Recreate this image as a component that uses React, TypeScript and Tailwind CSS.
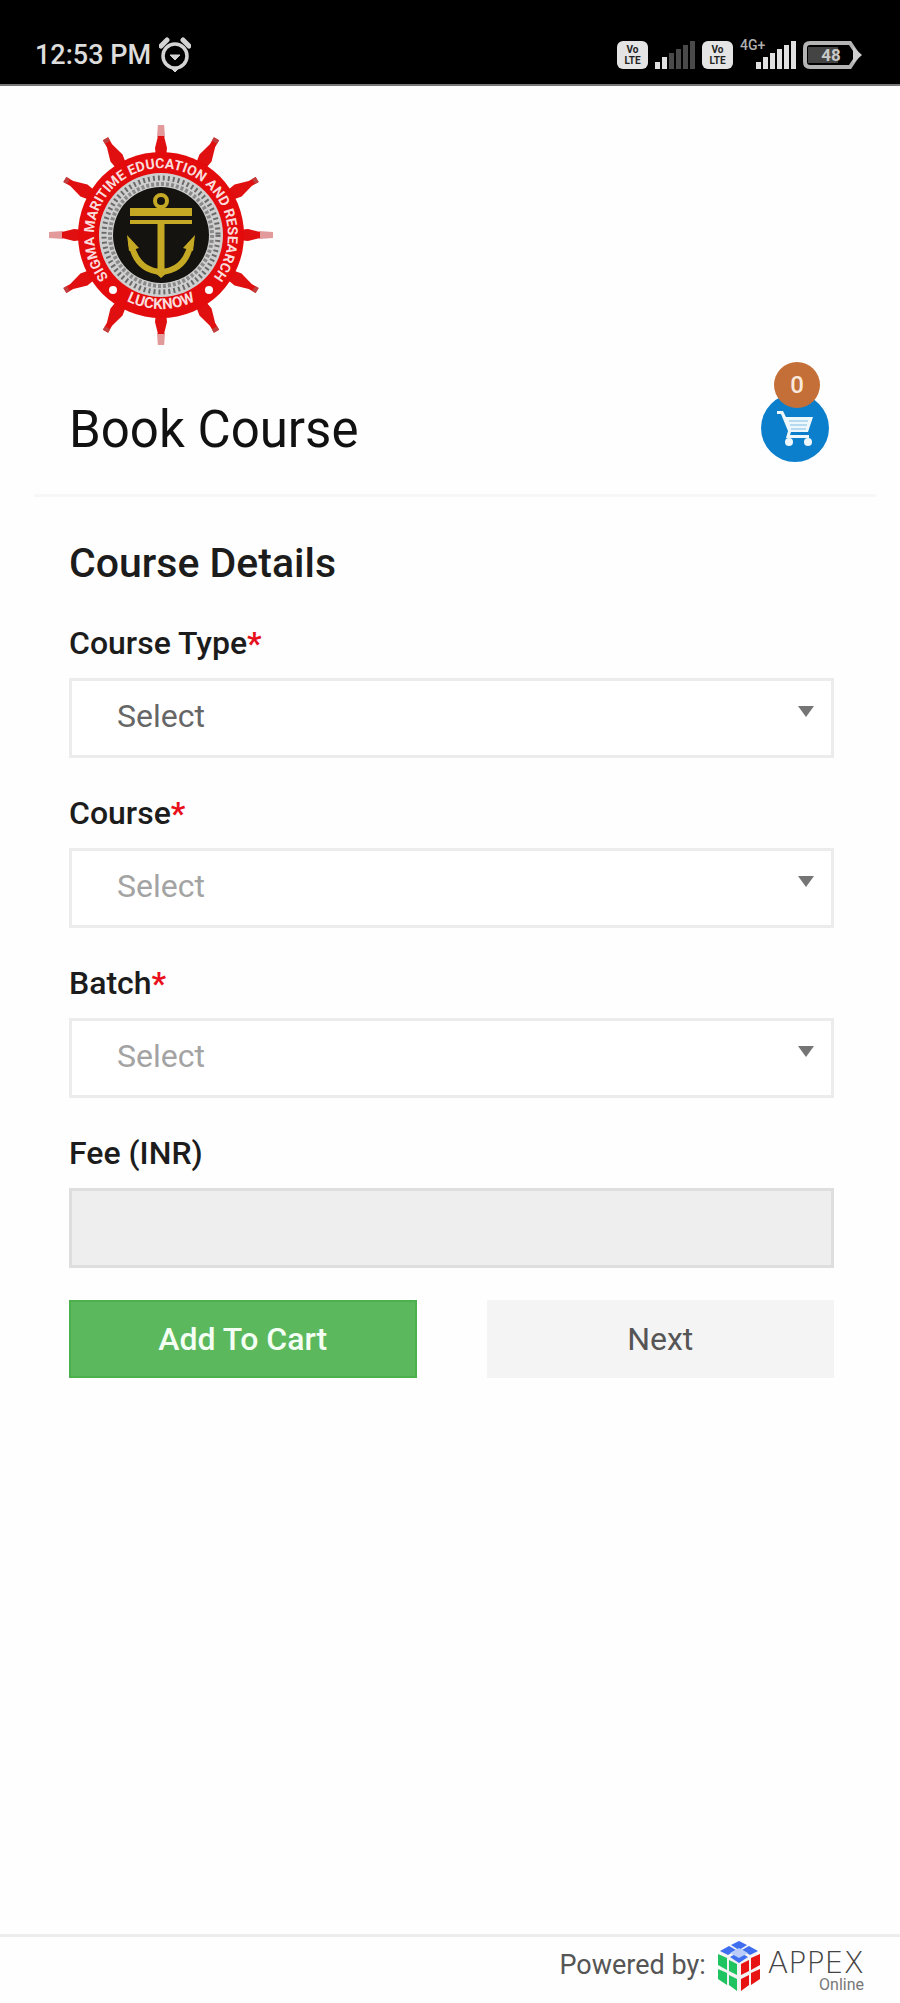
import { useState } from 'react';

type SelectFieldProps = {
  id: string;
  label: string;
  options: string[];
  value: string;
  disabled?: boolean;
  onChange: (value: string) => void;
};

const DIAGONAL_SPOKES = [30, 60, 120, 150, 210, 240, 300, 330];
const STRAIGHT_SPOKES = [0, 90, 180, 270];

function AlarmIcon() {
  return (
    <svg className="w-8 h-9" viewBox="0 0 32 36" fill="none" stroke="#d4d4d4" aria-hidden="true">
      <circle cx="16" cy="19" r="12" strokeWidth="3.5" />
      <path d="M2 9 8 3M30 9 24 3" strokeWidth="5" strokeLinecap="round" />
      <path d="M11 18h10l-5 5z" fill="#d4d4d4" strokeWidth="1" />
      <path d="M13 32h6l-3 3z" fill="#d4d4d4" />
    </svg>
  );
}

function VolteBadge({ top, bottom }: { top: string; bottom: string }) {
  return (
    <span className="flex flex-col items-center justify-center w-[31px] h-7 rounded-md bg-[#e4e4e4] text-[#222] font-bold text-[10px] leading-[11px]">
      <span>{top}</span>
      <span>{bottom}</span>
    </span>
  );
}

function SignalBars({ active }: { active: number }) {
  return (
    <svg className="w-10 h-7" viewBox="0 0 40 28" aria-hidden="true">
      {[7, 12, 16, 20, 24, 28].map((h, i) => (
        <rect
          key={h}
          x={i * 7}
          y={28 - h}
          width="5"
          height={h}
          fill={i < active ? '#e0e0e0' : '#4a4a4a'}
        />
      ))}
    </svg>
  );
}

function Battery() {
  return (
    <svg className="w-[59px] h-7" viewBox="0 0 59 28" aria-hidden="true">
      <path d="M7 2h40l8 12-8 12H7q-5 0-5-5V7q0-5 5-5z" fill="#000" stroke="#b4b4b4" strokeWidth="4" />
      <path d="M50 6l9 8-9 8z" fill="#d0d0d0" />
      <path d="M5 6h30v16H5z" fill="#444" />
      <text x="28" y="20" textAnchor="middle" fontSize="17" fontWeight="700" fill="#c8c8c8">
        48
      </text>
    </svg>
  );
}

function StatusBar() {
  return (
    <div className="flex items-end justify-between h-[86px] pl-[35px] pr-[38px] pb-[11px] bg-black border-b-2 border-[#777] text-[#dcdcdc]">
      <div className="flex items-center gap-2 text-[27px] leading-9 font-medium">
        <span>12:53 PM</span>
        <AlarmIcon />
      </div>
      <div className="flex items-center gap-[7px] pb-1">
        <VolteBadge top="Vo" bottom="LTE" />
        <SignalBars active={2} />
        <VolteBadge top="Vo" bottom="LTE" />
        <div className="relative flex pl-4">
          <span className="absolute left-0 -top-1 text-[14px] leading-4 font-medium text-[#b0b0b0]">4G+</span>
          <SignalBars active={6} />
        </div>
        <Battery />
      </div>
    </div>
  );
}

// ship wheel with the anchor in the middle
function InstituteLogo() {
  return (
    <svg className="w-[226px] h-[220px]" viewBox="-113 -110 226 220" role="img" aria-label="Institute logo">
      <defs>
        <path id="ring-top" d="M-47 48A67 67 0 1 1 47 48" />
        <path id="ring-bottom" d="M-61 44A77 77 0 0 0 61 44" />
      </defs>
      {STRAIGHT_SPOKES.map((a) => (
        <g key={a} transform={`rotate(${a})`}>
          <path d="M-3-112h6l1 14h-8z" fill="#e29a9a" />
          <path d="M-3-99h6l3 12-1 10h-10l-1-10z" fill="#e01010" />
        </g>
      ))}
      {DIAGONAL_SPOKES.map((a) => (
        <g key={a} transform={`rotate(${a})`}>
          <path d="M-3-111h6v8l4 14-2 12h-10l-2-12 4-14z" fill="#e01010" />
          <path d="M-3-111h6v4h-6z" fill="#c04040" />
        </g>
      ))}
      <circle r="83" fill="#e30b0b" />
      <circle r="62" fill="#cfcfcf" />
      <circle r="57" fill="none" stroke="#6a6a6a" strokeWidth="5" strokeDasharray="2 3" />
      <circle r="51" fill="none" stroke="#8a8a8a" strokeWidth="4" strokeDasharray="3 2" />
      <circle r="48" fill="#15130f" />
      <g fill="#fbdcdc" fontWeight="700">
        <text fontSize="14">
          <textPath href="#ring-top" startOffset="50%" textAnchor="middle">
            SIGMA MARITIME EDUCATION AND RESEARCH
          </textPath>
        </text>
        <text fontSize="15">
          <textPath href="#ring-bottom" startOffset="50%" textAnchor="middle">
            LUCKNOW
          </textPath>
        </text>
      </g>
      <circle cx="-48" cy="55" r="4" fill="#fff" />
      <circle cx="48" cy="55" r="4" fill="#fff" />
      <g stroke="#c5a925" fill="none">
        <circle cx="0" cy="-34" r="6" strokeWidth="4" />
        <path d="M0-28v8M0-12v50" strokeWidth="7" />
        <path d="M-30 8C-26 28-14 36 0 37C14 36 26 28 30 8" strokeWidth="6" />
      </g>
      <g fill="#c5a925">
        <path d="M-31-27h62v8h-62zM-31-15h62v4h-62z" />
        <path d="M-34 0l12 13-10 3zM34 0l-12 13 10 3zM-8 36h16l-8 7z" />
      </g>
    </svg>
  );
}

function CartIcon() {
  return (
    <svg className="w-10 h-10" viewBox="0 0 40 40" aria-hidden="true">
      <path d="M2 3h6l3 6h27l-5 15H16l-1 3h19v3H11l2-7L6 6H2z" fill="#eef7fc" />
      <path d="M14 13h19M15 17h17M16 21h15" stroke="#7fbfe6" strokeWidth="1" />
      <circle cx="14" cy="34" r="4" fill="#eef7fc" />
      <circle cx="33" cy="34" r="4" fill="#eef7fc" />
    </svg>
  );
}

function AppexCube() {
  return (
    <svg className="w-11 h-[50px]" viewBox="0 0 44 50" aria-hidden="true">
      <path d="M22 0l18 10v30L22 50 4 40V10z" fill="#f3f3f3" />
      <g fill="#3f6ff0">
        <path d="M22 0l8 4-8 5-8-5zM12 5l7 4-8 5-8-4zM32 5l9 5-8 4-8-5zM22 11l9 5-9 6-9-6z" />
      </g>
      <path d="M22 7l9 5-9 5-9-5z" fill="#b9ccfa" />
      <g fill="#1fc35f">
        <path d="M1 13l9 4v12l-9-5zM12 19l8 4v11l-8-4zM1 28l9 4v12l-9-6zM12 34l8 4v12l-8-6z" />
      </g>
      <g fill="#e81414">
        <path d="M43 13l-9 4v12l9-5zM32 19l-8 4v11l8-4zM43 28l-9 4v12l9-6zM32 34l-8 4v12l8-6z" />
      </g>
    </svg>
  );
}

function SelectField({ id, label, options, value, disabled = false, onChange }: SelectFieldProps) {
  return (
    <div>
      <label htmlFor={id} className="block text-[32px] leading-10 font-medium text-[#1c1c1c]">
        {label}
        <span className="font-bold text-[#e8101c]">*</span>
      </label>
      <div className="relative mt-[15px]">
        <select
          id={id}
          value={value}
          disabled={disabled}
          onChange={(e) => onChange(e.target.value)}
          className="block w-full h-20 pl-[45px] pr-16 pb-1 appearance-none bg-white border-3 border-[#ececec] text-[32px] text-[#666] disabled:text-[#a3a3a3] disabled:opacity-100"
        >
          {options.map((option) => (
            <option key={option}>{option}</option>
          ))}
        </select>
        <svg
          className="absolute right-5 top-7 w-4 h-3 pointer-events-none"
          viewBox="0 0 16 12"
          aria-hidden="true"
        >
          <path d="M0 0h16L8 11z" fill="#757575" />
        </svg>
      </div>
    </div>
  );
}

export default function App() {
  const [courseType, setCourseType] = useState('Select');
  const [course, setCourse] = useState('Select');
  const [batch, setBatch] = useState('Select');
  const [cartCount, setCartCount] = useState(0);

  return (
    <div className="flex flex-col min-h-screen bg-[#fefefe] font-[Roboto,sans-serif]">
      <StatusBar />

      <header className="pl-12 pt-[39px]">
        <InstituteLogo />
      </header>

      <main>
        <div className="flex items-center justify-between ml-[34px] mr-6 pl-[35px] pr-[47px] pt-[46px] pb-[29px] border-b-3 border-[#f7f7f7]">
          <h1 className="pt-1 text-[51px] leading-[70px] text-[#111]">Book Course</h1>
          <button
            type="button"
            aria-label="Cart"
            className="relative flex items-center justify-center w-[68px] h-[68px] rounded-full bg-[#0b7fcb]"
          >
            <CartIcon />
            <span className="absolute left-[13px] -top-8 flex items-center justify-center w-[46px] h-[46px] rounded-full bg-[#c46f38] text-[24px] font-medium text-[#fbe9dc]">
              {cartCount}
            </span>
          </button>
        </div>

        <form className="pl-[69px] pr-[66px] pt-10" onSubmit={(e) => e.preventDefault()}>
          <h2 className="text-[41px] leading-[52px] font-medium text-[#1c1c1c]">Course Details</h2>

          <div className="flex flex-col gap-[35px] mt-[34px]">
            <SelectField
              id="courseType"
              label="Course Type"
              options={['Select']}
              value={courseType}
              onChange={setCourseType}
            />
            <SelectField
              id="course"
              label="Course"
              options={['Select']}
              value={course}
              disabled
              onChange={setCourse}
            />
            <SelectField id="batch" label="Batch" options={['Select']} value={batch} disabled onChange={setBatch} />
            <div>
              <label htmlFor="fee" className="block text-[32px] leading-10 font-medium text-[#1c1c1c]">
                Fee (INR)
              </label>
              <input
                id="fee"
                type="text"
                readOnly
                className="block w-full h-20 mt-[15px] px-11 bg-[#eeeeee] border-3 border-[#dedede] text-[32px] text-[#666]"
              />
            </div>
          </div>

          <div className="grid grid-cols-2 gap-[70px] mt-8">
            <button
              type="button"
              onClick={() => setCartCount((count) => count + 1)}
              className="h-[78px] bg-[#5cb85c] border-2 border-[#4cb04c] text-[32px] font-medium text-[#f4fff4]"
            >
              Add To Cart
            </button>
            <button type="submit" className="h-[78px] bg-[#f4f4f4] text-[32px] text-[#555]">
              Next
            </button>
          </div>
        </form>
      </main>

      <footer className="flex items-start justify-end gap-[7px] h-[69px] mt-auto pr-9 pt-1 border-t-3 border-[#ededed]">
        <span className="pr-1 pt-2 text-[27px] leading-8 text-[#555]">Powered by:</span>
        <AppexCube />
        <div className="flex flex-col items-end pt-2 text-[#444]">
          <span className="font-['DejaVu_Sans',sans-serif] font-extralight text-[30px] leading-7">APPEX</span>
          <span className="text-[16px] leading-4 text-[#777]">Online</span>
        </div>
      </footer>
    </div>
  );
}
